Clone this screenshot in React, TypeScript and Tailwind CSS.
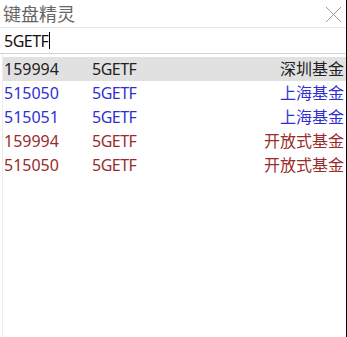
import React from 'react';

type Row = { code: string; name: string; market: string; color: string };

const rows: Row[] = [
  { code: '159994', name: '5GETF', market: '深圳基金', color: 'text-[#222222]' },
  { code: '515050', name: '5GETF', market: '上海基金', color: 'text-[#3030d0]' },
  { code: '515051', name: '5GETF', market: '上海基金', color: 'text-[#3030d0]' },
  { code: '159994', name: '5GETF', market: '开放式基金', color: 'text-[#9a2b2b]' },
  { code: '515050', name: '5GETF', market: '开放式基金', color: 'text-[#9a2b2b]' },
];

export default function App() {
  return (
    <div
      className="w-[347px] h-[337px] bg-white flex flex-col border-r border-black overflow-hidden"
      style={{ fontFamily: '"Noto Sans", "Noto Sans CJK SC", sans-serif' }}
    >
      {/* Title bar */}
      <div className="h-[28px] flex items-center justify-between pl-[3px] pr-[4px] border-b border-[#e6e6e6]">
        <span className="text-[18px] leading-none text-[#666666]">键盘精灵</span>
        <svg width="17" height="17" viewBox="0 0 17 17" className="mt-[1px]">
          <path d="M1 1 L16 16 M16 1 L1 16" stroke="#9a9a9a" strokeWidth="1" fill="none" />
        </svg>
      </div>

      {/* Search input */}
      <div className="h-[26px] flex items-center pl-[4px] border-b border-[#d4d4d4]">
        <span className="text-[16px] leading-none text-[#111111] tracking-[-0.5px]">5GETF</span>
        <span className="w-[1px] h-[17px] bg-black ml-[1px]" />
      </div>

      {/* Result list */}
      <div className="flex-1 flex flex-col pt-[3px] border-l border-[#ececec] ml-[2px]">
        {rows.map((r, i) => (
          <div
            key={i}
            className={`h-[24px] flex items-center text-[16px] leading-none pr-[2px] ${r.color} ${
              i === 0 ? 'bg-[#e1e1e1]' : ''
            }`}
          >
            <span className="w-[89px] pl-[1px]">{r.code}</span>
            <span className="flex-1 tracking-[-0.5px]">{r.name}</span>
            <span>{r.market}</span>
          </div>
        ))}
      </div>
    </div>
  );
}
